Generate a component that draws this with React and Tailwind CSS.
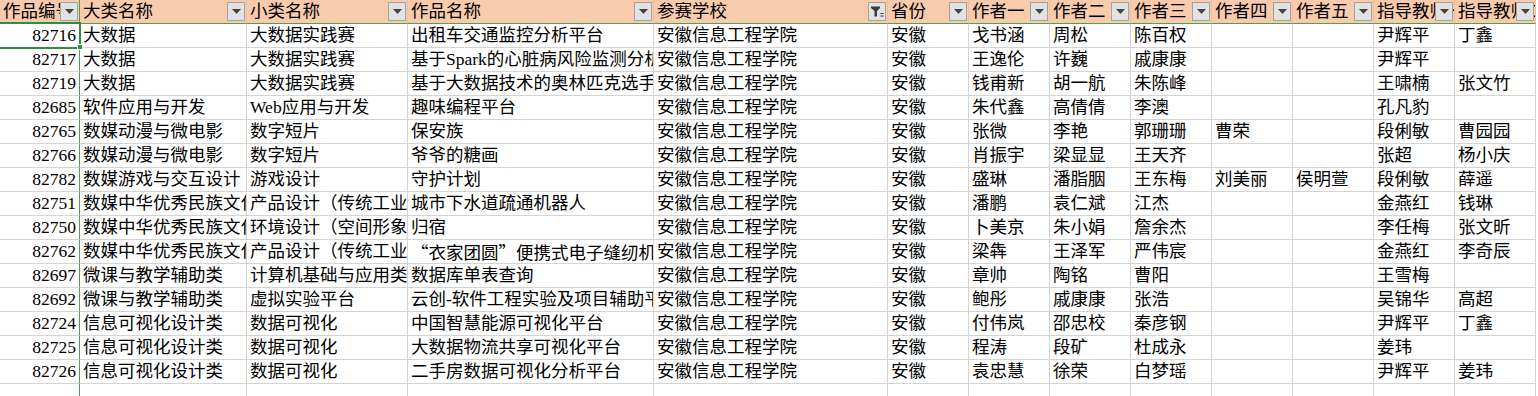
import React from "react";

const headers = [
    "作品编号", "大类名称", "小类名称", "作品名称", "参赛学校", "省份",
    "作者一", "作者二", "作者三", "作者四", "作者五", "指导教师一", "指导教师二",
];

const rows = [
    ["82716", "大数据", "大数据实践赛", "出租车交通监控分析平台", "戈书涵", "周松", "陈百权", "", "", "尹辉平", "丁鑫"],
    ["82717", "大数据", "大数据实践赛", "基于Spark的心脏病风险监测分析系统", "王逸伦", "许巍", "戚康康", "", "", "尹辉平", ""],
    ["82719", "大数据", "大数据实践赛", "基于大数据技术的奥林匹克选手数据分析", "钱甫新", "胡一航", "朱陈峰", "", "", "王啸楠", "张文竹"],
    ["82685", "软件应用与开发", "Web应用与开发", "趣味编程平台", "朱代鑫", "高倩倩", "李澳", "", "", "孔凡豹", ""],
    ["82765", "数媒动漫与微电影", "数字短片", "保安族", "张微", "李艳", "郭珊珊", "曹荣", "", "段俐敏", "曹园园"],
    ["82766", "数媒动漫与微电影", "数字短片", "爷爷的糖画", "肖振宇", "梁显显", "王天齐", "", "", "张超", "杨小庆"],
    ["82782", "数媒游戏与交互设计", "游戏设计", "守护计划", "盛琳", "潘脂胭", "王东梅", "刘美丽", "侯明萱", "段俐敏", "薛遥"],
    ["82751", "数媒中华优秀民族文化", "产品设计（传统工业设计）", "城市下水道疏通机器人", "潘鹏", "袁仁斌", "江杰", "", "", "金燕红", "钱琳"],
    ["82750", "数媒中华优秀民族文化", "环境设计（空间形象设计）", "归宿", "卜美京", "朱小娟", "詹余杰", "", "", "李任梅", "张文昕"],
    ["82762", "数媒中华优秀民族文化", "产品设计（传统工业设计）", "“衣家团圆”便携式电子缝纫机", "梁犇", "王泽军", "严伟宸", "", "", "金燕红", "李奇辰"],
    ["82697", "微课与教学辅助类", "计算机基础与应用类", "数据库单表查询", "章帅", "陶铭", "曹阳", "", "", "王雪梅", ""],
    ["82692", "微课与教学辅助类", "虚拟实验平台", "云创-软件工程实验及项目辅助平台", "鲍彤", "戚康康", "张浩", "", "", "吴锦华", "高超"],
    ["82724", "信息可视化设计类", "数据可视化", "中国智慧能源可视化平台", "付伟岚", "邵忠校", "秦彦钢", "", "", "尹辉平", "丁鑫"],
    ["82725", "信息可视化设计类", "数据可视化", "大数据物流共享可视化平台", "程涛", "段矿", "杜成永", "", "", "姜玮", ""],
    ["82726", "信息可视化设计类", "数据可视化", "二手房数据可视化分析平台", "袁忠慧", "徐荣", "白梦瑶", "", "", "尹辉平", "姜玮"],
];

const gridCols =
    "grid grid-cols-[80px_167px_161px_246px_234px_81px_81px_81px_81px_81px_81px_81px_81px]";

function FilterButton({ active }) {
    return (
        <span className="absolute right-[1px] top-[2px] w-[18px] h-[19px] border border-[#a3a3a3] bg-[#e2e2e2] flex items-center justify-center">
            {active ? (
                <svg width="13" height="11" viewBox="0 0 13 11">
                    <path d="M0 0.5 H9 V2 L6 5 V10.5 H3.5 V5 L0 2 Z" fill="#3c3c3c" />
                    <rect x="9.5" y="7" width="3" height="1" fill="#3c3c3c" />
                    <rect x="9.5" y="9.5" width="3" height="1" fill="#3c3c3c" />
                </svg>
            ) : (
                <svg width="9" height="5" viewBox="0 0 9 5">
                    <polygon points="0,0 9,0 4.5,5" fill="#444" />
                </svg>
            )}
        </span>
    );
}

function App() {
    return (
        <div className="relative w-[1538px] h-[396px] overflow-hidden bg-white text-black text-[17.5px] leading-[23px] font-['Liberation_Serif','Noto_Sans_CJK_SC',serif]">
            <div className={gridCols}>
                {headers.map((h, i) => (
                    <div
                        key={h}
                        className={
                            "relative h-[24px] bg-[#f8cbad] border-b border-b-[#4f9f55] overflow-hidden whitespace-nowrap pl-[3px] " +
                            (i === 0 ? "border-r border-r-[#4f9f55]" : "border-r border-r-[#eec0a2]")
                        }
                    >
                        {h}
                        <FilterButton active={i === 4} />
                    </div>
                ))}
            </div>

            {rows.map((r) => {
                const cells = [r[0], r[1], r[2], r[3], "安徽信息工程学院", "安徽", ...r.slice(4)];
                return (
                    <div key={r[0]} className={gridCols}>
                        {cells.map((c, i) => (
                            <div
                                key={i}
                                className={
                                    "h-[24px] border-b border-b-[#d4d4d4] overflow-hidden whitespace-nowrap " +
                                    (i === 0
                                        ? "text-right pr-[3px] border-r border-r-[#4f9f55]"
                                        : "pl-[3px] border-r border-r-[#d4d4d4]") +
                                    (c.includes("“") ? " font-['Noto_Sans_CJK_SC',sans-serif]" : "")
                                }
                            >
                                {c}
                            </div>
                        ))}
                    </div>
                );
            })}

            <div className={gridCols}>
                {headers.map((h, i) => (
                    <div
                        key={h}
                        className={
                            "h-[24px] border-b border-b-[#d4d4d4] " +
                            (i === 0 ? "border-r border-r-[#4f9f55]" : "border-r border-r-[#d4d4d4]")
                        }
                    />
                ))}
            </div>

            {/* active cell A2 */}
            <div className="absolute left-[-2px] top-[22px] w-[83px] h-[27px] border-2 border-[#2f8f3c]" />
            <div className="absolute left-[77px] top-[44px] w-[6px] h-[6px] bg-[#2f8f3c] border border-white" />
        </div>
    );
}

export default App;
